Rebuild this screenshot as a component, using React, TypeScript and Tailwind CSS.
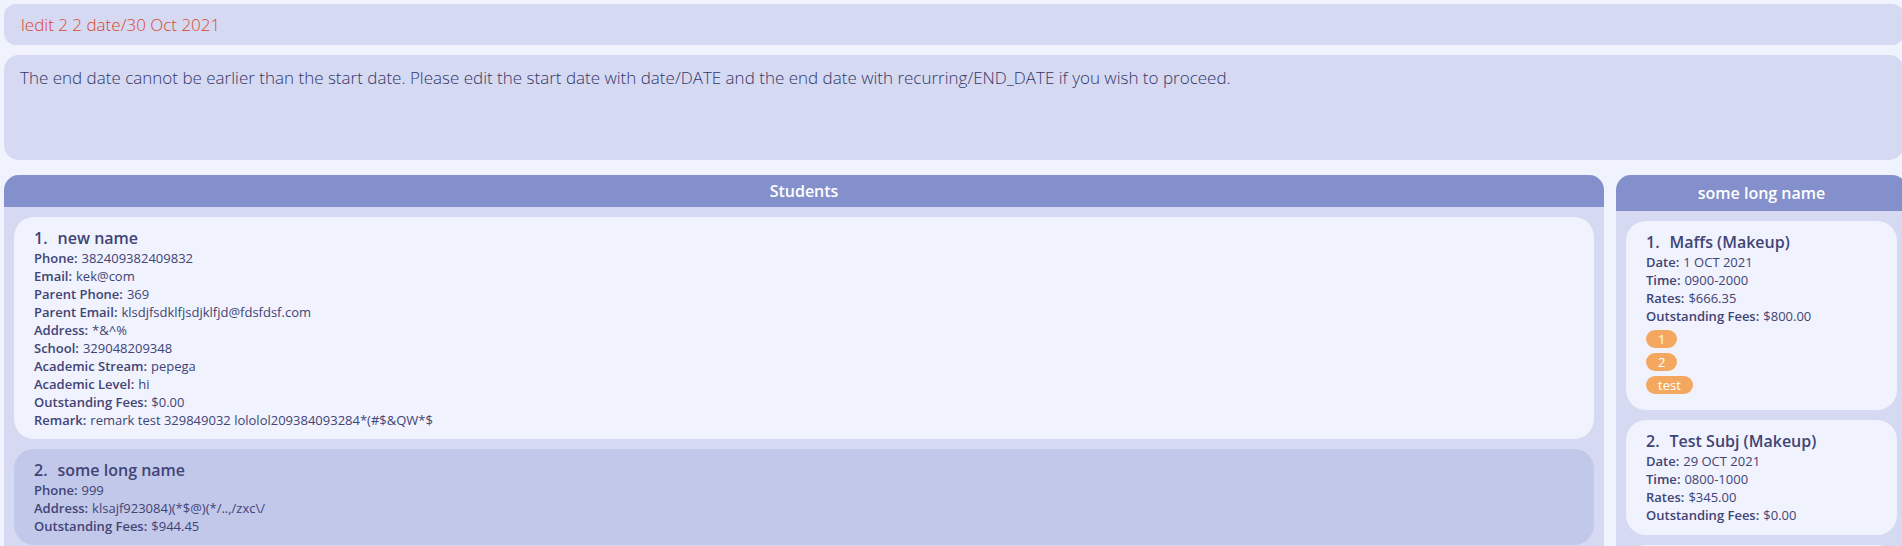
import { useState } from "react";

type Field = { label: string; value: string };
type Entry = { title: string; fields: Field[]; tags?: string[]; selected?: boolean };

const students: Entry[] = [
  {
    title: "new name",
    fields: [
      { label: "Phone", value: "382409382409832" },
      { label: "Email", value: "kek@com" },
      { label: "Parent Phone", value: "369" },
      { label: "Parent Email", value: "klsdjfsdklfjsdjklfjd@fdsfdsf.com" },
      { label: "Address", value: "*&^%" },
      { label: "School", value: "329048209348" },
      { label: "Academic Stream", value: "pepega" },
      { label: "Academic Level", value: "hi" },
      { label: "Outstanding Fees", value: "$0.00" },
      { label: "Remark", value: "remark test 329849032 lololol209384093284*(#$&QW*$" },
    ],
  },
  {
    title: "some long name",
    selected: true,
    fields: [
      { label: "Phone", value: "999" },
      { label: "Address", value: "klsajf923084)(*$@)(*/..,/zxc\\/" },
      { label: "Outstanding Fees", value: "$944.45" },
    ],
  },
];

const lessons: Entry[] = [
  {
    title: "Maffs (Makeup)",
    fields: [
      { label: "Date", value: "1 OCT 2021" },
      { label: "Time", value: "0900-2000" },
      { label: "Rates", value: "$666.35" },
      { label: "Outstanding Fees", value: "$800.00" },
    ],
    tags: ["1", "2", "test"],
  },
  {
    title: "Test Subj (Makeup)",
    fields: [
      { label: "Date", value: "29 OCT 2021" },
      { label: "Time", value: "0800-1000" },
      { label: "Rates", value: "$345.00" },
      { label: "Outstanding Fees", value: "$0.00" },
    ],
  },
];

function Card({ entry, index, padding }: { entry: Entry; index: number; padding: string }) {
  return (
    <li className={`shrink-0 rounded-[20px] px-5 ${padding} ${entry.selected ? "bg-[#c1c8ea]" : "bg-[#f0f2fe]"}`}>
      <h3 className="flex gap-[10px] text-base leading-[22px] font-semibold">
        <span>{index}.</span>
        <span>{entry.title}</span>
      </h3>
      <dl className="text-[13px] leading-[18px]">
        {entry.fields.map((field) => (
          <div key={field.label} className="flex gap-1 whitespace-nowrap">
            <dt className="font-semibold">{field.label}:</dt>
            <dd>{field.value}</dd>
          </div>
        ))}
      </dl>
      {entry.tags && (
        <ul className="my-[5px] flex flex-col items-start gap-[5px]">
          {entry.tags.map((tag) => (
            <li key={tag} className="rounded-full bg-[#f4a85f] px-3 text-[13px] leading-[18px] text-white">
              {tag}
            </li>
          ))}
        </ul>
      )}
    </li>
  );
}

export default function App() {
  const [command, setCommand] = useState("ledit 2 2 date/30 Oct 2021");

  return (
    <div className="h-screen overflow-hidden bg-[#f0f2fe] font-['Open_Sans',sans-serif] text-[#414474]">
      <main className="-mr-[5px] flex h-full flex-col pt-1 pl-1">
        <input
          aria-label="Command"
          value={command}
          onChange={(event) => setCommand(event.target.value)}
          className="mr-[3px] h-[41px] shrink-0 rounded-xl bg-[#d5d9f2] px-[17px] text-[17px] font-light text-[#d9482f] outline-none"
        />
        <textarea
          aria-label="Result"
          readOnly
          value="The end date cannot be earlier than the start date. Please edit the start date with date/DATE and the end date with recurring/END_DATE if you wish to proceed."
          className="mt-[10px] mr-[3px] h-[105px] shrink-0 resize-none rounded-[15px] bg-[#d5d9f2] px-4 py-[11px] text-[17px] leading-6 font-light text-[#343768] outline-none"
        />
        <div className="mt-[15px] flex min-h-0 flex-1 gap-3">
          <section className="flex min-w-0 flex-1 flex-col overflow-hidden rounded-t-[15px] bg-[#d5d9f2]">
            <h2 className="shrink-0 bg-[#8490cb] text-center text-base leading-8 font-semibold text-white">Students</h2>
            <ul className="flex flex-col gap-[10px] p-[10px]">
              {students.map((entry, i) => (
                <Card key={entry.title} entry={entry} index={i + 1} padding="py-[10px]" />
              ))}
            </ul>
          </section>
          <section className="flex w-[291px] shrink-0 flex-col overflow-hidden rounded-t-[15px] bg-[#d5d9f2]">
            <h2 className="shrink-0 bg-[#8490cb] text-center text-base leading-9 font-semibold text-white">some long name</h2>
            <ul className="flex flex-col gap-[10px] p-[10px]">
              {lessons.map((entry, i) => (
                <Card key={entry.title} entry={entry} index={i + 1} padding="pt-[10px] pb-[11px]" />
              ))}
              <li className="h-28 shrink-0 rounded-[20px] bg-[#f0f2fe]" />
            </ul>
          </section>
        </div>
      </main>
    </div>
  );
}
